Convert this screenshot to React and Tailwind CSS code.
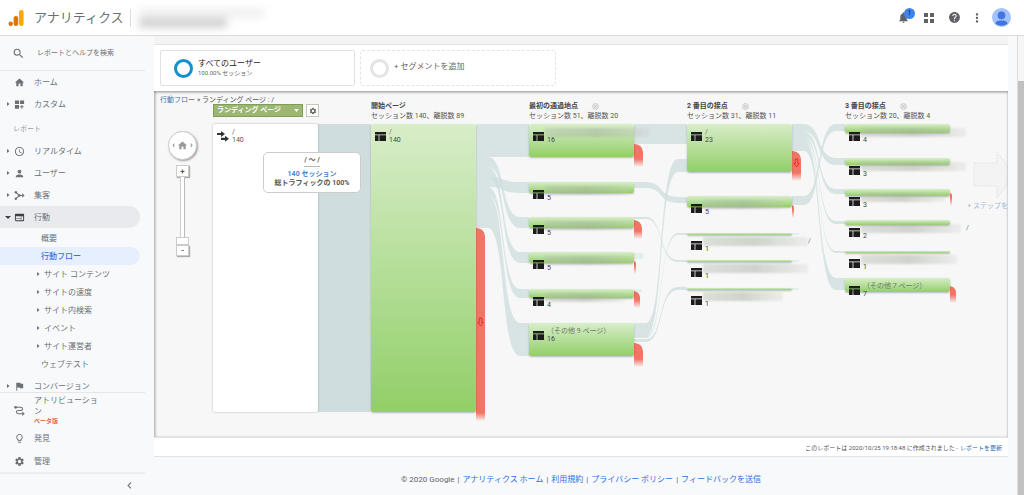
import React, { useState } from 'react';
import {
  MdSearch,
  MdHome,
  MdAccessTime,
  MdPerson,
  MdWeb,
  MdFlag,
  MdSettings,
  MdLightbulbOutline,
  MdNotifications,
  MdHelp,
  MdMoreVert,
  MdChevronLeft,
} from 'react-icons/md';

const CustomIcon = ({ className }) => (
  <svg viewBox="0 0 24 24" fill="currentColor" className={className}>
    <path d="M2 3h9v8H2zM13 3h9v8h-9zM2 13h9v8H2zM16 13h2v3h3v2h-3v3h-2v-3h-3v-2h3z" />
  </svg>
);

const AcquisitionIcon = ({ className }) => (
  <svg viewBox="0 0 24 24" className={className}>
    <path d="M4 5l8 7-8 7M12 12h8" fill="none" stroke="currentColor" strokeWidth="2.4" />
    <circle cx="4" cy="5" r="2.6" fill="currentColor" />
    <circle cx="4" cy="19" r="2.6" fill="currentColor" />
    <circle cx="12" cy="12" r="2.6" fill="currentColor" />
    <path d="M18 7l5 5-5 5z" fill="currentColor" />
  </svg>
);

const AttributionIcon = ({ className }) => (
  <svg viewBox="0 0 24 24" className={className}>
    <path
      d="M4 5h11a3.5 3.5 0 0 1 0 7H9a3.5 3.5 0 0 0 0 7h10"
      fill="none"
      stroke="currentColor"
      strokeWidth="2.4"
    />
    <circle cx="3.5" cy="5" r="3" fill="currentColor" />
    <path d="M18 14l5.5 5-5.5 5z" fill="currentColor" />
  </svg>
);

const PageIcon = () => (
  <svg viewBox="0 0 11 9" className="h-[9px] w-[11px] shrink-0" fill="#1c1c1c">
    <path d="M0 0h11v2.5H0zM0 3.3h3.6V9H0zM4.4 3.3H11V9H4.4z" />
  </svg>
);

const Caret = ({ open }) => (
  <svg viewBox="0 0 6 6" className="h-[6px] w-[6px] shrink-0" fill="currentColor">
    {open ? <path d="M0 2h6l-3 3z" /> : <path d="M2 1l2.5 2L2 5z" />}
  </svg>
);

const mainNav = [
  { label: 'リアルタイム', icon: MdAccessTime },
  { label: 'ユーザー', icon: MdPerson },
  { label: '集客', icon: AcquisitionIcon },
  { label: '行動', icon: MdWeb, open: true },
];

const subNav = [
  { label: '概要' },
  { label: '行動フロー', active: true },
  { label: 'サイト コンテンツ', children: true },
  { label: 'サイトの速度', children: true },
  { label: 'サイト内検索', children: true },
  { label: 'イベント', children: true },
  { label: 'サイト運営者', children: true },
  { label: 'ウェブテスト' },
];

// x / y / h are canvas coordinates, every node is 105 wide
const columns = [
  {
    x: 217,
    title: '開始ページ',
    stats: 'セッション数 140、離脱数 89',
    nodes: [{ y: 33, h: 288, label: '/', count: 140, exit: { y: 137, w: 9, h: 193, arrow: true } }],
  },
  {
    x: 375,
    title: '最初の通過地点',
    stats: 'セッション数 51、離脱数 20',
    closable: true,
    nodes: [
      { y: 33, h: 33, count: 16, mask: 105, exit: { y: 53, w: 9, h: 23 } },
      { y: 91, h: 11, count: 5, mask: 84 },
      { y: 126, h: 11, count: 5, mask: 88, exit: { y: 129, w: 8, h: 19 } },
      { y: 161, h: 11, count: 5, mask: 88, exit: { y: 170, w: 2, h: 13 } },
      { y: 198, h: 9, count: 4, mask: 80, exit: { y: 200, w: 6, h: 17 } },
      { y: 232, h: 33, label: '（その他 9 ページ）', count: 16, exit: { y: 252, w: 9, h: 24 } },
    ],
  },
  {
    x: 533,
    title: '2 番目の接点',
    stats: 'セッション数 31、離脱数 11',
    closable: true,
    nodes: [
      { y: 33, h: 48, label: '/', count: 23, exit: { y: 60, w: 9, h: 30, arrow: true } },
      { y: 105, h: 11, count: 5, mask: 80, exit: { y: 114, w: 2, h: 13 } },
      { y: 142, h: 2, count: 1, mask: 105, slash: true },
      { y: 169, h: 2, count: 1, mask: 105 },
      { y: 197, h: 2, count: 1, mask: 80 },
    ],
  },
  {
    x: 691,
    title: '3 番目の接点',
    stats: 'セッション数 20、離脱数 4',
    closable: true,
    nodes: [
      { y: 33, h: 9, count: 4, mask: 105 },
      { y: 67, h: 7, count: 3, mask: 105 },
      { y: 98, h: 7, count: 3, mask: 84, exit: { y: 102, w: 2, h: 13 } },
      { y: 129, h: 5, count: 2, mask: 100, slash: true },
      { y: 160, h: 2, count: 1, mask: 96 },
      { y: 187, h: 14, label: '（その他 7 ページ）', count: 7, exit: { y: 195, w: 6, h: 17 } },
    ],
  },
];

// [x, source top, source bottom, target top, target bottom]
const links = [
  [322, 33, 66, 33, 66],
  [322, 86, 96, 91, 102],
  [322, 66, 76, 126, 137],
  [322, 76, 86, 161, 172],
  [322, 96, 104, 198, 207],
  [322, 104, 137, 232, 265],
  [480, 33, 53, 33, 53],
  [480, 91, 97, 106, 112],
  [480, 126, 128, 169, 171],
  [480, 232, 245, 68, 81],
  [480, 245, 247, 142, 144],
  [480, 248, 251, 196, 199],
  [638, 33, 41, 67, 74],
  [638, 41, 46, 98, 103],
  [638, 46, 49, 130, 133],
  [638, 49, 51, 160, 162],
  [638, 51, 60, 187, 199],
  [638, 105, 114, 33, 40],
];

const linkPath = ([x, a, b, c, d]) =>
  `M${x} ${a}h12C${x + 30} ${a} ${x + 24} ${c} ${x + 44} ${c}h9V${d}h-9C${x + 24} ${d} ${x + 30} ${b} ${x + 12} ${b}h-12z`;

const NavRow = ({ label, icon: Icon, open, caret = true }) => (
  <a
    href="#"
    className={`mr-[5px] flex h-[22px] items-center rounded-r-full pl-[5px] ${open ? 'bg-[#e8eaed] text-[#3c4043]' : ''}`}
  >
    <span className="w-[9px]">{caret && <Caret open={open} />}</span>
    <Icon className="h-[11px] w-[11px] shrink-0" />
    <span className="pl-[9px] text-[#6b7075]">{label}</span>
  </a>
);

const Sidebar = () => (
  <nav className="flex w-[145px] shrink-0 flex-col text-[8px] leading-[11px] text-[#6b7075]">
    <label className="flex h-[35px] items-center border-b border-[#e4e6e8] pl-3">
      <MdSearch className="h-[13px] w-[13px] shrink-0" />
      <input
        type="text"
        aria-label="検索"
        placeholder="レポートとヘルプを検索"
        className="ml-3 w-full min-w-0 bg-transparent text-[7px] outline-none placeholder:text-[#6b7075]"
      />
    </label>
    <NavRow label="ホーム" icon={MdHome} caret={false} />
    <NavRow label="カスタム" icon={CustomIcon} />
    <div className="flex h-[25px] items-center pl-[13px] pt-1 text-[7px] text-[#9aa0a6]">レポート</div>
    {mainNav.map((item) => (
      <NavRow key={item.label} {...item} />
    ))}
    <ul className="mb-[2px] pt-[1px]">
      {subNav.map((item) => (
        <li key={item.label}>
          <a
            href="#"
            className={`mr-[5px] flex h-[18px] items-center rounded-r-full ${
              item.active ? 'bg-[#e6effd] font-medium text-[#3a70dc]' : ''
            } ${item.children ? 'gap-[3px] pl-[35px]' : 'pl-[41px]'}`}
          >
            {item.children && <Caret />}
            {item.label}
          </a>
        </li>
      ))}
    </ul>
    <div className="h-[18px] border-b border-[#e4e6e8]">
      <NavRow label="コンバージョン" icon={MdFlag} />
    </div>
    <a href="#" className="flex h-[34px] items-center pl-[14px]">
      <AttributionIcon className="h-[11px] w-[11px] shrink-0" />
      <span className="w-[76px] pl-[9px]">
        アトリビューション
        <span className="block text-[6px] font-bold leading-[8px] text-[#e0663f]">ベータ版</span>
      </span>
    </a>
    <div className="flex flex-col gap-[1px] border-b-2 border-[#eceef0]">
      <NavRow label="発見" icon={MdLightbulbOutline} caret={false} />
      <NavRow label="管理" icon={MdSettings} caret={false} />
    </div>
    <button type="button" aria-label="メニューを閉じる" className="mr-[9px] flex h-[22px] items-center self-end">
      <MdChevronLeft className="h-[13px] w-[13px]" />
    </button>
  </nav>
);

const Header = () => (
  <header className="flex h-9 items-center border-b border-[#dcdcdc] bg-white pl-2 pr-[13px] text-[#5f6368]">
    <svg viewBox="0 0 17 18" className="h-[18px] w-[17px]">
      <rect x="11" y="1" width="4.6" height="16" rx="2.3" fill="#f9ab00" />
      <rect x="5.6" y="7" width="4.6" height="10" rx="2.3" fill="#e37400" />
      <circle cx="2.7" cy="14.8" r="2.2" fill="#e37400" />
    </svg>
    <span className="pl-[9px] text-[13px] text-[#6b7075]">アナリティクス</span>
    <span className="ml-[6px] h-[18px] border-l border-[#dadce0]" />
    <button type="button" aria-label="アカウント" className="ml-2 flex w-[125px] flex-col gap-[2px] blur-[4px]">
      <span className="h-[8px] w-full bg-[#ededed]" />
      <span className="h-[8px] w-[88px] bg-[#c8c8c8]" />
    </button>
    <div className="ml-auto flex items-center">
      <button type="button" aria-label="通知" className="relative mr-[14px]">
        <MdNotifications className="h-[13px] w-[13px]" />
        <span className="absolute -top-[3px] left-[7px] h-[11px] w-[11px] rounded-full bg-[#3f83f1] text-center text-[7px] leading-[11px] text-[#202124]">
          1
        </span>
      </button>
      <button type="button" aria-label="アプリ" className="mr-[14px]">
        <svg viewBox="0 0 10 10" className="h-[10px] w-[10px]" fill="currentColor">
          <path d="M0 0h4v4H0zM6 0h4v4H6zM0 6h4v4H0zM6 6h4v4H6z" />
        </svg>
      </button>
      <button type="button" aria-label="ヘルプ" className="mr-[9px]">
        <MdHelp className="h-[13px] w-[13px]" />
      </button>
      <button type="button" aria-label="その他" className="mr-2">
        <MdMoreVert className="h-[14px] w-[14px]" />
      </button>
      <button type="button" aria-label="アカウント情報">
        <svg viewBox="0 0 18 18" className="h-[19px] w-[19px]">
          <circle cx="9" cy="9" r="9" fill="#a1c2fa" />
          <circle cx="9" cy="7" r="3.6" fill="#4374e0" />
          <path d="M3.2 14.6c1-2.6 3.300-2.800 5.800-2.800s4.800.2 5.800 2.800a9 9 0 0 1-11.600 0z" fill="#4374e0" />
        </svg>
      </button>
    </div>
  </header>
);

const Exit = ({ x, exit }) => (
  <div
    className="absolute flex items-center justify-center rounded-tr-[8px] bg-[#ef7565] [mask-image:linear-gradient(to_top,transparent,#000_8px)]"
    style={{ left: x, top: exit.y, width: exit.w, height: exit.h }}
  >
    {exit.arrow && (
      <svg viewBox="0 0 8 11" className="mb-[6px] h-[10px] w-[7px]" fill="none" stroke="#f02018">
        <path d="M2.500 1h3v5H7L4 10 1 6h1.500z" />
      </svg>
    )}
  </div>
);

const FlowNode = ({ x, node }) => (
  <>
    {node.exit && <Exit x={x + 105} exit={node.exit} />}
    <div
      className="absolute w-[105px] rounded-[2px] bg-linear-to-b from-[#d8edc9] to-[#92cf66] shadow-[0_1px_2px_rgba(0,0,0,0.25)]"
      style={{ left: x, top: node.y, height: node.h }}
    />
    {node.mask && (
      <div
        className="absolute h-[9px] bg-linear-to-r from-[#b4bcae]/40 via-[#a8b0a2]/50 to-[#c4c9c0]/20 blur-[1px]"
        style={{ left: x + 16, top: node.y + 4, width: node.mask }}
      />
    )}
    <div className="absolute flex gap-[3px]" style={{ left: x + 4, top: node.y + 4 }}>
      <div className="pt-1">
        <PageIcon />
      </div>
      <div className="text-[7px] leading-[8px] whitespace-nowrap text-[#444]">
        <div className="h-2 text-[#6d7a66]">{node.label}</div>
        <div>{node.count}</div>
      </div>
    </div>
    {node.slash && (
      <span className="absolute text-[7px] leading-[8px] text-[#777]" style={{ left: x + 121, top: node.y + 4 }}>
        /
      </span>
    )}
  </>
);

const ZoomControl = () => {
  const [zoom, setZoom] = useState(100);

  return (
    <div className="absolute left-[14px] top-[40px] flex flex-col items-center text-[#555]">
      <button
        type="button"
        aria-label="最初に戻る"
        className="flex h-[29px] w-[29px] items-center justify-center gap-[2px] rounded-full border border-[#ccc] bg-white text-[9px] leading-none shadow-[1px_1px_2px_rgba(0,0,0,0.35)]"
      >
        <span>‹</span>
        <MdHome className="h-[11px] w-[11px] text-[#999]" />
        <span>›</span>
      </button>
      <button
        type="button"
        onClick={() => setZoom(Math.max(0, zoom - 10))}
        className="mt-[5px] h-[12px] w-[13px] border border-[#ccc] bg-white text-[8px] leading-[9px] font-bold shadow-[1px_1px_1px_rgba(0,0,0,0.3)]"
      >
        +
      </button>
      <div className="flex h-[68px] w-[13px] justify-center bg-[linear-gradient(to_right,transparent_4px,#ccc_4px,#ccc_5px,#fff_5px,#fff_8px,#bbb_8px,#bbb_9px,transparent_9px)]">
        <input
          type="range"
          aria-label="ズーム"
          min="0"
          max="100"
          value={zoom}
          onChange={(e) => setZoom(Number(e.target.value))}
          className="h-full w-[13px] appearance-none bg-transparent [writing-mode:vertical-lr] [&::-webkit-slider-thumb]:h-[8px] [&::-webkit-slider-thumb]:w-[13px] [&::-webkit-slider-thumb]:appearance-none [&::-webkit-slider-thumb]:border [&::-webkit-slider-thumb]:border-[#ccc] [&::-webkit-slider-thumb]:bg-white"
        />
      </div>
      <button
        type="button"
        onClick={() => setZoom(Math.min(100, zoom + 10))}
        className="h-[11px] w-[13px] border border-[#ccc] bg-white text-[8px] leading-[9px] font-bold shadow-[1px_1px_1px_rgba(0,0,0,0.3)]"
      >
        -
      </button>
    </div>
  );
};

const FlowChart = () => (
  <div className="relative h-[347px] overflow-hidden border-b border-[#e2e2e2] bg-[#f7f7f7] text-[7px] leading-[10px] text-[#555]">
    <div className="flex gap-[2px] px-[6px] pt-1">
      <a href="#" className="text-[#3a76ad]">
        行動フロー
      </a>
      <span>» ランディング ページ : /</span>
    </div>

    <svg className="absolute inset-0 h-full w-full" fill="#cddede">
      <path d="M164 33h53v288h-53z" fill="#cfdddf" />
      {links.map((link, i) => (
        <path key={i} d={linkPath(link)} opacity="0.75" />
      ))}
      <path d="M480 162h9v6h-9zM480 198h8v3h-8zM638 142h7v2h-7zM638 169h7v2h-7zM638 197h7v2h-7z" opacity="0.4" />
      <path
        d="M820 72h23v-11l17 23-17 23v-12h-23z"
        fill="#f3f3f3"
        stroke="#e4e4e4"
        strokeDasharray="2 1"
      />
    </svg>

    <div className="absolute left-[59px] top-[13px] flex items-center gap-[3px]">
      <div className="relative">
        <select
          aria-label="ディメンション"
          className="block h-[13px] w-[90px] appearance-none border border-[#809c56] bg-[#9bb772] pl-[3px] text-[7px] leading-[11px] font-bold text-white"
        >
          <option>ランディング ページ</option>
        </select>
        <svg viewBox="0 0 6 4" className="pointer-events-none absolute right-1 top-[5px] h-[3px] w-[5px]" fill="#fff">
          <path d="M0 0h6L3 4z" />
        </svg>
      </div>
      <button
        type="button"
        aria-label="設定"
        className="flex h-[13px] w-[13px] items-center justify-center border border-[#c3cbb8] bg-white text-[#666]"
      >
        <MdSettings className="h-[8px] w-[8px]" />
      </button>
    </div>

    <ZoomControl />

    <div className="absolute left-[59px] top-[33px] flex h-[288px] w-[105px] gap-[3px] rounded-[2px] bg-white px-1 py-[4px] shadow-[0_0_2px_rgba(0,0,0,0.35)]">
      <svg viewBox="0 0 12 11" className="mt-[3px] h-[11px] w-[12px]" fill="#333">
        <path d="M0 1.900h4V0l4 3-4 3V4.100H0zM4 6.700h4V4.800l4 3-4 3V8.900H4z" />
      </svg>
      <div className="leading-[8px]">
        <div>/</div>
        <div>140</div>
      </div>
    </div>

    {columns.map((col) => (
      <React.Fragment key={col.x}>
        <div className="absolute top-[10px] whitespace-nowrap" style={{ left: col.x }}>
          <div className="flex items-center gap-[14px] font-bold text-[#444]">
            {col.title}
            {col.closable && (
              <button type="button" aria-label="閉じる">
                <svg viewBox="0 0 7 7" className="h-[7px] w-[7px]">
                  <circle cx="3.500" cy="3.500" r="3" fill="#e8e8e8" stroke="#cfcfcf" />
                  <path d="M2.300 2.300l2.400 2.400M4.700 2.300L2.300 4.700" stroke="#b5b5b5" strokeWidth="0.800" />
                </svg>
              </button>
            )}
          </div>
          <div>{col.stats}</div>
        </div>
        {col.nodes.map((node) => (
          <FlowNode key={node.y} x={col.x} node={node} />
        ))}
      </React.Fragment>
    ))}

    <a href="#" className="absolute right-0 top-[110px] whitespace-nowrap text-[#9bb9d3]">
      + ステップを
    </a>

    <div className="absolute left-[109px] top-[61px] flex h-[41px] w-[98px] flex-col items-center rounded-[5px] border border-[#ccc] bg-white pt-[3px] font-bold leading-[9px]">
      <div className="mb-[3px] border-b border-[#bbb] pb-[1px]">/ ～ /</div>
      <div className="text-[#4a84cc]">140 セッション</div>
      <div>総トラフィックの 100%</div>
    </div>

    <div className="pointer-events-none absolute inset-0 shadow-[inset_0_2px_2px_rgba(0,0,0,0.22),inset_2px_0_2px_rgba(0,0,0,0.18),inset_-1px_0_2px_rgba(0,0,0,0.1)]" />
  </div>
);

const Segments = () => (
  <div className="flex gap-[5px] border-t border-[#e6e6e6] bg-white px-[6px] pb-[5px] pt-[5px] leading-[9px]">
    <button
      type="button"
      className="flex h-[36px] w-[195px] items-center gap-[5px] rounded-[2px] border border-[#e2e2e2] pl-[13px] text-left"
    >
      <span className="h-[19px] w-[19px] rounded-full border-[3px] border-[#158fce]" />
      <span className="text-[8px] text-[#222]">
        すべてのユーザー
        <span className="block text-[6px] text-[#666]">100.00% セッション</span>
      </span>
    </button>
    <button
      type="button"
      className="flex h-[36px] w-[196px] items-center gap-[5px] rounded-[2px] border border-dashed border-[#e4e4e4] pb-[4px] pl-[9px] text-[8px] text-[#666]"
    >
      <span className="mt-1 h-[19px] w-[19px] rounded-full border-[3px] border-[#e4e4e4]" />
      + セグメントを追加
    </button>
  </div>
);

const footerLinks = ['アナリティクス ホーム', '利用規約', 'プライバシー ポリシー', 'フィードバックを送信'];

const App = () => (
  <div className="flex min-h-screen flex-col bg-[#f8f9fa] font-[Roboto,'Noto_Sans_CJK_JP',sans-serif]">
    <Header />
    <div className="flex flex-1">
      <Sidebar />
      <main className="min-w-0 flex-1 px-[9px]">
        <div className="h-2 bg-[#f4f4f4]" />
        <Segments />
        <FlowChart />
        <div className="flex h-[19px] items-center justify-end gap-[2px] border-b border-[#e4e4e4] bg-white pr-[6px] text-[6px] text-[#555]">
          <span>このレポートは 2020/10/25 19:18:48 に作成されました -</span>
          <a href="#" className="text-[#2a6db0]">
            レポートを更新
          </a>
        </div>
        <footer className="flex h-[38px] items-center justify-center pt-2 text-[8px] text-[#5f6368]">
          © 2020 Google
          {footerLinks.map((label) => (
            <React.Fragment key={label}>
              <span className="px-[3px]">|</span>
              <a href="#" className="text-[#2f6fe4]">
                {label}
              </a>
            </React.Fragment>
          ))}
        </footer>
      </main>
      <div className="flex w-[7px] shrink-0 flex-col border-l border-[#ddd] bg-[#f5f5f5] pt-[45px]">
        <div className="flex-1 bg-[#c1c1c1]" />
      </div>
    </div>
  </div>
);

export default App;
